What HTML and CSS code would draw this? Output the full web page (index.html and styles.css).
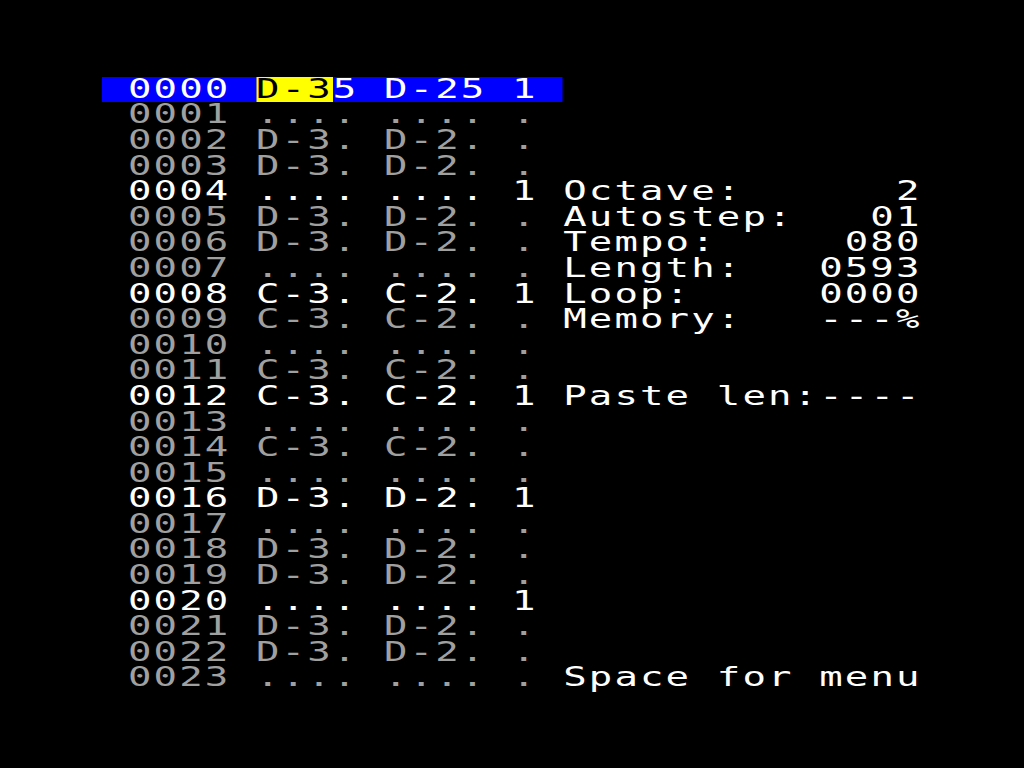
FILE: index.html
```html
<!DOCTYPE html>
<html>
<head>
<meta charset="utf-8">
<title>Tracker</title>
<link rel="stylesheet" href="styles.css">
</head>
<body>
<div class="screen">
  <div class="pattern">
    <div class="rows">
      <div class="row cur"> 0000 <span class="cursor">D-3</span>5 D-25 1 </div>
      <div class="row"> 0001 .... .... . </div>
      <div class="row"> 0002 D-3. D-2. . </div>
      <div class="row"> 0003 D-3. D-2. . </div>
      <div class="row beat"> 0004 .... .... 1 </div>
      <div class="row"> 0005 D-3. D-2. . </div>
      <div class="row"> 0006 D-3. D-2. . </div>
      <div class="row"> 0007 .... .... . </div>
      <div class="row beat"> 0008 C-3. C-2. 1 </div>
      <div class="row"> 0009 C-3. C-2. . </div>
      <div class="row"> 0010 .... .... . </div>
      <div class="row"> 0011 C-3. C-2. . </div>
      <div class="row beat"> 0012 C-3. C-2. 1 </div>
      <div class="row"> 0013 .... .... . </div>
      <div class="row"> 0014 C-3. C-2. . </div>
      <div class="row"> 0015 .... .... . </div>
      <div class="row beat"> 0016 D-3. D-2. 1 </div>
      <div class="row"> 0017 .... .... . </div>
      <div class="row"> 0018 D-3. D-2. . </div>
      <div class="row"> 0019 D-3. D-2. . </div>
      <div class="row beat"> 0020 .... .... 1 </div>
      <div class="row"> 0021 D-3. D-2. . </div>
      <div class="row"> 0022 D-3. D-2. . </div>
      <div class="row"> 0023 .... .... . </div>
    </div>
    <div class="panel">
      <div class="info"><span>Octave:</span><span>2</span></div>
      <div class="info"><span>Autostep:</span><span>01</span></div>
      <div class="info"><span>Tempo:</span><span>080</span></div>
      <div class="info"><span>Length:</span><span>0593</span></div>
      <div class="info"><span>Loop:</span><span>0000</span></div>
      <div class="info"><span>Memory:</span><span>---%</span></div>
      <div class="info paste"><span>Paste len:</span><span>----</span></div>
      <div class="info hint"><span>Space for menu</span></div>
    </div>
  </div>
</div>
</body>
</html>
```
FILE: styles.css
```css
html, body {
  margin: 0;
  padding: 0;
  background: #000;
}
body {
  width: 1024px;
  height: 768px;
  overflow: hidden;
}
.screen {
  width: 682.667px;
  height: 768px;
  box-sizing: border-box;
  padding-top: 76.8px;
  padding-left: 68.267px;
  transform: scaleX(1.5);
  transform-origin: 0 0;
  font-family: "DejaVu Sans Mono", "Liberation Mono", monospace;
  font-size: 26px;
  line-height: 25.6px;
  letter-spacing: 1.4133px;
  color: #a0a0a0;
}
.pattern {
  display: flex;
}
.rows {
  width: 307.2px;
}
.row {
  height: 25.6px;
  white-space: pre;
}
.row.beat {
  color: #fff;
}
.row.cur {
  background: #0000ff;
  color: #fff;
}
.cursor {
  display: inline-block;
  height: 25.6px;
  vertical-align: top;
  background: #ffff00;
  color: #000;
}
.panel {
  width: 238.933px;
  padding-top: 102.4px;
  display: flex;
  flex-direction: column;
  color: #fff;
}
.info {
  height: 25.6px;
  display: flex;
  justify-content: space-between;
  white-space: pre;
}
.info.paste {
  margin-top: 51.2px;
}
.info.hint {
  margin-top: auto;
}
```
